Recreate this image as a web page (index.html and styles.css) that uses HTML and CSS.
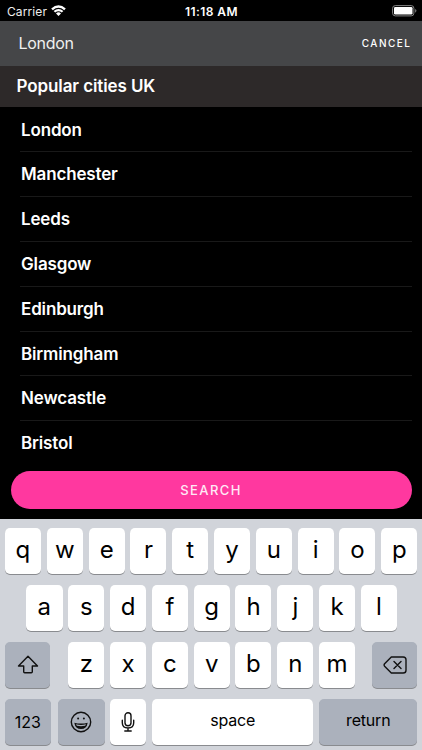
FILE: index.html
```html
<!DOCTYPE html>
<html lang="en">
<head>
<meta charset="utf-8">
<title>City search</title>
<link rel="stylesheet" href="styles.css">
</head>
<body>
<div class="status">
  <div class="carrier"><span>Carrier</span>
    <svg class="wifi" viewBox="0 0 15 11"><path d="M.2 3.6Q7.5-3 14.8 3.6L13.2 5.2Q7.5.3 1.8 5.2ZM2.6 6Q7.5 1.8 12.4 6L10.8 7.6Q7.5 4.8 4.2 7.6ZM5 8.4Q7.5 6.3 10 8.4L7.5 10.9Z" fill="#fff"/></svg>
  </div>
  <time class="clock">11:18 AM</time>
  <svg class="battery" viewBox="0 0 25 12"><rect x=".6" y=".6" width="21.3" height="10.3" rx="2.7" fill="none" stroke="#858585"/><rect x="2" y="2" width="18.5" height="7.6" rx="1.3" fill="#fff"/><path d="M23.2 4v3.7q1.2-.6 1.2-1.85T23.2 4Z" fill="#858585"/></svg>
</div>
<div class="searchbar"><span class="query">London</span><span class="cancel">CANCEL</span></div>
<h1 class="heading">Popular cities UK</h1>
<ul class="cities">
  <li>London</li><li>Manchester</li><li>Leeds</li><li>Glasgow</li><li>Edinburgh</li><li>Birmingham</li><li>Newcastle</li><li>Bristol</li>
</ul>
<div class="action"><button class="search">SEARCH</button></div>
<div class="keyboard">
  <div class="row top"><b>q</b><b>w</b><b>e</b><b>r</b><b>t</b><b>y</b><b>u</b><b>i</b><b>o</b><b>p</b></div>
  <div class="row middle"><b>a</b><b>s</b><b>d</b><b>f</b><b>g</b><b>h</b><b>j</b><b>k</b><b>l</b></div>
  <div class="row lower">
    <b class="dark shift"><svg width="22" height="20" viewBox="0 0 22 20"><path d="M11 1.3 20.5 11H15.3v5.8q0 1-1 1H7.7q-1 0-1-1V11H1.5Z"/></svg></b>
    <b>z</b><b>x</b><b>c</b><b>v</b><b>b</b><b>n</b><b>m</b>
    <b class="dark delete"><svg width="24" height="18" viewBox="0 0 24 18"><path d="M8.3 1H20.2Q23 1 23 3.8v10.4Q23 17 20.2 17H8.3L1.6 10.2Q.6 9 1.6 7.8ZM11 5.5l7 7m0-7-7 7"/></svg></b>
  </div>
  <div class="row bottom">
    <b class="dark word num">123</b>
    <b class="dark emoji"><svg width="22" height="22" viewBox="0 0 22 22"><circle cx="11" cy="11" r="9.7"/><circle class="fill" cx="8.1" cy="7.6" r="1"/><circle class="fill" cx="13.9" cy="7.6" r="1"/><path class="fill" d="M4.3 11.7Q11 13.4 17.7 11.7 16.7 18 11 18T4.3 11.7Z"/><path class="teeth" d="M6 13.3Q11 14.5 16 13.3 15.5 14.4 15 14.8 11 15.7 7 14.8 6.5 14.4 6 13.3Z"/></svg></b>
    <b class="mic"><svg width="14" height="20" viewBox="0 0 14 20"><rect x="4" y=".8" width="6" height="13" rx="3"/><path d="M1.3 8.2v2.6Q1.3 16 7 16t5.7-5.2V8.2M7 16v3M3.8 19h6.4"/></svg></b>
    <b class="word space">space</b>
    <b class="dark word return">return</b>
  </div>
</div>
</body>
</html>
```
FILE: styles.css
```css
* { box-sizing: border-box; }
body {
  margin: 0;
  width: 422px;
  height: 750px;
  overflow: hidden;
  background: #000;
  color: #fff;
  font-family: Inter, sans-serif;
}
.status {
  display: grid;
  grid-template-columns: 1fr auto 1fr;
  align-items: center;
  height: 21px;
  padding: 1px 5px 0 7px;
  font-size: 12px;
}
.carrier { display: flex; align-items: center; gap: 4px; letter-spacing: .1px; color: #eee; }
.wifi { width: 15px; height: 11px; margin-top: -1px; }
.clock { font-weight: 600; letter-spacing: .4px; margin-left: -1px; }
.battery { width: 25px; height: 12px; justify-self: end; margin-top: -1px; }
.searchbar {
  display: flex;
  align-items: center;
  justify-content: space-between;
  height: 44.5px;
  padding: 0 10.5px 0 18.5px;
  background: #454648;
}
.query { font-size: 16px; color: #f0f0f0; letter-spacing: -.3px; }
.cancel { font-size: 10px; font-weight: 500; letter-spacing: 1.5px; margin-top: -1px; }
.heading {
  margin: 0;
  height: 41.5px;
  padding-left: 16.5px;
  background: #2d2929;
  font-size: 17px;
  font-weight: 600;
  line-height: 41px;
  letter-spacing: -.1px;
}
.cities { margin: 0; padding: .7px 10px 0 20px; list-style: none; }
.cities li {
  height: 44.8px;
  padding-left: 1px;
  border-bottom: 1px solid #191919;
  font-size: 17px;
  font-weight: 600;
  line-height: 44.8px;
  letter-spacing: -.15px;
}
.cities li:last-child { border-color: transparent; }
.action { height: 53.1px; padding: 5.4px 10.5px 0; }
.search {
  display: block;
  width: 100%;
  height: 37.3px;
  padding: 0;
  border: 0;
  border-radius: 19px;
  background: #ff389f;
  color: #ffe9f5;
  font: 500 13px Inter, sans-serif;
  letter-spacing: 1.4px;
}
.keyboard {
  display: flex;
  flex-direction: column;
  gap: 11px;
  height: 231px;
  padding: 8.5px 4.5px 0;
  background: #d1d4da;
  color: #000;
}
.row { display: flex; gap: 5.8px; height: 46px; }
.row b {
  display: flex;
  align-items: center;
  justify-content: center;
  flex: 0 0 36px;
  height: 46px;
  padding-bottom: 3px;
  border-radius: 5px;
  background: #fff;
  box-shadow: 0 1px 0 #898b8f;
  font-size: 24px;
  font-weight: 400;
}
.top b:first-child { flex-basis: 36.6px; }
.middle { padding-left: 21.5px; }
.middle b:first-child { flex-basis: 36.5px; }
.row .dark { background: #abb1bc; padding: 0; }
.row .shift { flex-basis: 45.7px; margin-right: 12.3px; padding-left: 1px; }
.row .delete { flex-basis: 45.5px; margin-left: 11px; }
.row .num { flex-basis: 46.8px; }
.row .emoji { flex-basis: 46.8px; margin-left: 1px; }
.row .mic { padding: 0; margin-left: -.6px; margin-right: .3px; }
.row .space { flex-basis: 161px; }
.row .return { flex-basis: 98.5px; padding-bottom: 3px; }
.row .word { font-size: 16px; font-weight: 400; }
.row .space, .row .return { letter-spacing: -.2px; }
svg { display: block; }
.row svg { fill: none; stroke: #111; stroke-width: 1.4; stroke-linejoin: round; stroke-linecap: round; }
.row .fill { fill: #111; stroke: none; }
.row .teeth { fill: #abb1bc; stroke: none; }
```
